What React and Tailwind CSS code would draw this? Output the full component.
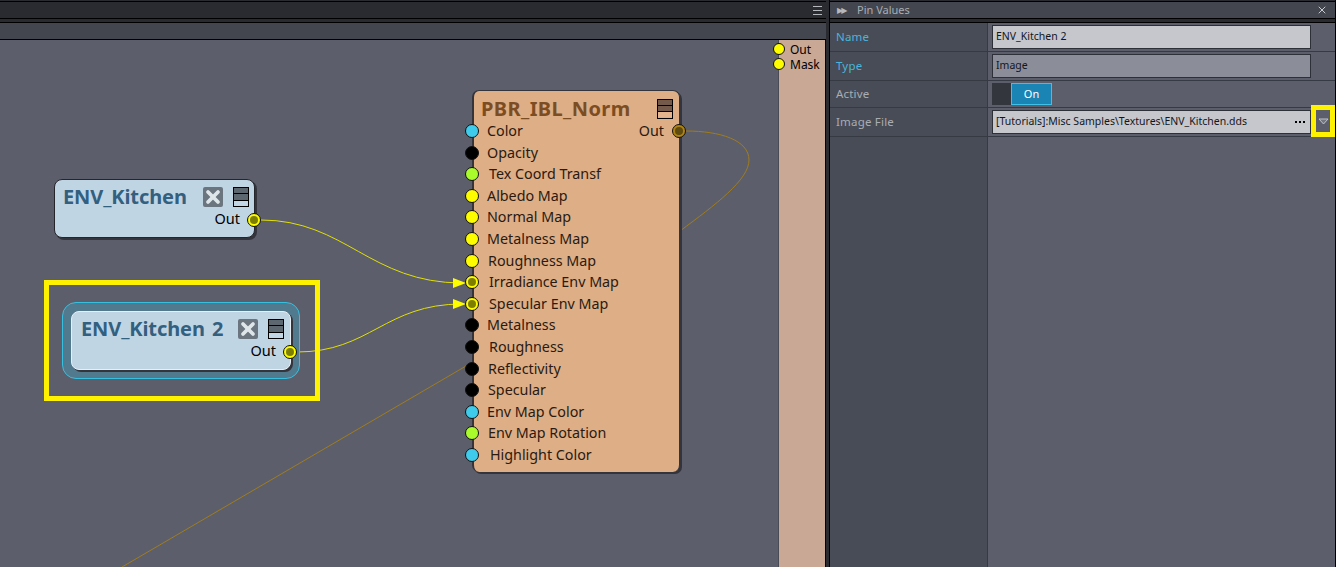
import React from "react";
import { X } from "lucide-react";

const tahoma = "font-['Noto_Sans','DejaVu_Sans',sans-serif]";

// pin colours used in the graph
const pinColor = {
  blue: "bg-[#3fcbeb]",
  black: "bg-black",
  green: "bg-[#a9fb2c]",
  yellow: "bg-[#fdfd00]",
};

const pbrPins = [
  { label: "Color", color: "blue", pad: "pl-[13px]" },
  { label: "Opacity", color: "black", pad: "pl-[13px]" },
  { label: "Tex Coord Transf", color: "green", pad: "pl-[15px]" },
  { label: "Albedo Map", color: "yellow", pad: "pl-[13px]" },
  { label: "Normal Map", color: "yellow", pad: "pl-[13px]" },
  { label: "Metalness Map", color: "yellow", pad: "pl-[13px]" },
  { label: "Roughness Map", color: "yellow", pad: "pl-[14px]" },
  { label: "Irradiance Env Map", color: "yellow", pad: "pl-[15px]", linked: true },
  { label: "Specular Env Map", color: "yellow", pad: "pl-[15px]", linked: true },
  { label: "Metalness", color: "black", pad: "pl-[13px]" },
  { label: "Roughness", color: "black", pad: "pl-[15px]" },
  { label: "Reflectivity", color: "black", pad: "pl-[14px]" },
  { label: "Specular", color: "black", pad: "pl-[14px]" },
  { label: "Env Map Color", color: "blue", pad: "pl-[13px]" },
  { label: "Env Map Rotation", color: "green", pad: "pl-[14px]" },
  { label: "Highlight Color", color: "blue", pad: "pl-[16px]" },
];

function Pin({ color, linked, className = "" }) {
  return (
    <span
      className={`absolute w-[14px] h-[14px] rounded-full border border-[#111] flex items-center justify-center ${pinColor[color]} ${className}`}
    >
      {linked && <span className="w-[8px] h-[8px] rounded-full bg-[#7d7d00]" />}
    </span>
  );
}

// little three band collapse icon on each node
function BandIcon({ top = "bg-[#5d6770]", bottom = "bg-[#c3d6e5]" }) {
  return (
    <span className="flex flex-col w-[16px] h-[20px] border border-black">
      <span className={`flex-1 border-b border-black ${top}`} />
      <span className={`flex-1 border-b border-black ${top}`} />
      <span className={`flex-1 ${bottom}`} />
    </span>
  );
}

function CloseBox() {
  return (
    <span className="w-[20px] h-[20px] rounded-[2px] bg-[#6a7580] flex items-center justify-center">
      <X size={20} strokeWidth={4.5} className="text-[#dfe6ea]" />
    </span>
  );
}

function EnvNode({ title, selected, className, titlePad, iconPad }) {
  return (
    <div
      className={`absolute h-[59px] rounded-[8px] bg-[#c0d5e4] shadow-[2px_2px_0_#33343c] ${
        selected ? "border border-[#e8f0f5]" : "border border-[#24262c]"
      } ${className}`}
    >
      <div className="flex items-center h-[34px]">
        <span className={`${titlePad} text-[20px] font-bold leading-none tracking-[-0.1px] [word-spacing:2px] text-[#33607f] whitespace-nowrap`}>
          {title}
        </span>
        <span className={`ml-auto flex items-center gap-[10px] ${iconPad}`}>
          <CloseBox />
          <BandIcon />
        </span>
      </div>
      <div className="absolute right-[14px] top-[28px] text-[14.5px] leading-[20px] text-black">Out</div>
      <Pin color="yellow" linked className="right-[-7px] top-[33px]" />
    </div>
  );
}

function PropRow({ label, labelColor = "text-[#a9adb3]", height, children }) {
  return (
    <div className={`flex border-b border-[#363a42] ${height}`}>
      <div className={`w-[158px] shrink-0 flex items-center pl-[6px] text-[11.5px] tracking-[0.2px] ${labelColor} bg-[#484c56] border-r border-[#363a42]`}>
        {label}
      </div>
      <div className="flex-1 flex items-center pl-[4px] bg-[#5c5f6b]">{children}</div>
    </div>
  );
}

export default function App() {
  return (
    <div className={`w-[1336px] h-[567px] flex overflow-hidden bg-[#2a2b31] ${tahoma}`}>
      {/* graph side */}
      <div className="w-[826px] shrink-0 flex flex-col">
        <div className="h-[16px] mt-[1px] flex items-center justify-end pr-[4px] bg-[#2a2b31] border-t border-black box-content">
          <span className="flex flex-col gap-[3px] w-[9px]">
            <span className="h-px bg-[#b5b8bd]" />
            <span className="h-px bg-[#b5b8bd]" />
            <span className="h-px bg-[#b5b8bd]" />
          </span>
        </div>
        <div className="h-[1px] bg-black" />
        <div className="h-[16px] mt-[3px] bg-[#43464f] border-t border-black box-content" />
        <div className="relative h-[528px] bg-[#5c5f6b] border-t border-r border-black overflow-hidden">
          {/* output node cut off at the right */}
          <div className="absolute left-[778px] top-0 right-0 bottom-0 bg-[#c9a896] border-l border-[#4a4c55]">
            <div className="absolute left-[11px] top-[2px] text-[12px] leading-[15px] text-black">
              <div>Out</div>
              <div>Mask</div>
            </div>
            <Pin color="yellow" className="left-[-6px] top-[3px] !w-[12px] !h-[12px]" />
            <Pin color="yellow" className="left-[-6px] top-[18px] !w-[12px] !h-[12px]" />
          </div>

          {/* wires */}
          <svg className="absolute inset-0" width="826" height="527" viewBox="0 40 826 527" fill="none">
            <path d="M261 220 C345 220 370 283 462 283" stroke="#e2e000" strokeWidth="1" />
            <path d="M297 352 C370 352 385 304 462 304" stroke="#e2e000" strokeWidth="1" />
            <path d="M686 131 C720 131 749 140 749 160 C749 180 715 205 680 231" stroke="#a07c1c" strokeWidth="1" />
            <path d="M466 366 L122 567" stroke="#a07c1c" strokeWidth="1" />
            <path d="M453 278 L466 283 L453 288 Z" fill="#fdfd00" />
            <path d="M453 299 L466 304 L453 309 Z" fill="#fdfd00" />
          </svg>

          <EnvNode title="ENV_Kitchen" titlePad="pl-[8px]" iconPad="pr-[5px]" className="left-[54px] top-[139px] w-[201px]" />

          {/* selected node with glow */}
          <div className="absolute left-[62px] top-[262px] w-[238px] h-[77px] rounded-[14px] bg-[#527a8f] border border-[#35c0e0]" />
          <EnvNode title="ENV_Kitchen 2" titlePad="pl-[9px]" iconPad="pr-[6px]" selected className="left-[71px] top-[271px] w-[220px]" />

          {/* big material node */}
          <div className="absolute left-[472px] top-[50px] w-[208px] h-[382px] rounded-[7px] bg-[#deae87] border-l-2 border-t border-r border-[#33343c] shadow-[2px_2px_0_#33343c]">
            <div className="flex items-center h-[29px] pt-[6px]">
              <span className="pl-[7px] text-[20px] font-bold leading-none tracking-[0.4px] text-[#7c4d22] whitespace-nowrap">
                PBR_IBL_Norm
              </span>
              <span className="ml-auto pr-[6px]">
                <BandIcon top="bg-[#735a4a]" bottom="bg-[#e4b48e]" />
              </span>
            </div>
            <div className="relative flex flex-col">
              {pbrPins.map((pin) => (
                <div key={pin.label} className={`relative h-[21.6px] flex items-center text-[14.3px] text-[#2a1a10] whitespace-nowrap ${pin.pad}`}>
                  <Pin color={pin.color} linked={pin.linked} className="left-[-9px] top-[4px]" />
                  {pin.label}
                </div>
              ))}
              <div className="absolute right-[15px] top-0 h-[21.6px] flex items-center text-[14.3px] text-[#2a1a10]">Out</div>
              <span className="absolute right-[-7px] top-[4px] w-[14px] h-[14px] rounded-full border border-[#111] bg-[#b08410] flex items-center justify-center">
                <span className="w-[8px] h-[8px] rounded-full bg-[#5f4a10]" />
              </span>
            </div>
          </div>

          {/* highlight box */}
          <div className="absolute left-[44px] top-[240px] w-[276px] h-[121px] border-[5px] border-[#fff200]" />
        </div>
      </div>

      {/* pin values panel */}
      <div className="flex-1 ml-[3px] mr-[3px] flex flex-col border-x border-black">
        <div className="h-[16px] mt-[1px] box-content flex items-center bg-[#43464f] border-y border-black text-[#a9adb3] text-[11px]">
          <span className="flex pl-[7px] w-[27px] text-[8px] leading-none tracking-[-2px] text-[#b5b8bd]">▶▶</span>
          <span>Pin Values</span>
          <X size={12} className="ml-auto mr-[7px] text-[#c8cbd0]" />
        </div>
        <div className="mt-[3px] flex-1 flex flex-col border-t border-black">
          <PropRow label="Name" labelColor="text-[#48b4dc]" height="h-[29px]">
            <div className="w-[319px] h-[24px] flex items-center pl-[3px] bg-[#c5c7cd] border border-[#2d3037] text-[10.5px] text-[#14161a]">
              ENV_Kitchen 2
            </div>
          </PropRow>
          <PropRow label="Type" labelColor="text-[#48b4dc]" height="h-[29px]">
            <div className="w-[319px] h-[24px] flex items-center pl-[3px] bg-[#8b8e99] border border-[#2d3037] text-[10.5px] text-[#14161a]">
              Image
            </div>
          </PropRow>
          <PropRow label="Active" height="h-[27px]">
            <div className="flex w-[60px] h-[22px] bg-[#34363d]">
              <span className="w-[19px]" />
              <span className="flex-1 flex items-center justify-center bg-[#1a84b4] border border-[#3ec0e8] text-[11px] text-white">On</span>
            </div>
          </PropRow>
          <PropRow label="Image File" height="h-[29px]">
            <div className="w-[319px] h-[24px] flex items-center pl-[3px] pr-[5px] bg-[#c5c7cd] border border-[#2d3037] text-[10.5px] text-[#14161a] whitespace-nowrap">
              [Tutorials]:Misc Samples\Textures\ENV_Kitchen.dds
              <span className="ml-auto flex gap-[2px]">
                <span className="w-[2px] h-[2px] bg-black" />
                <span className="w-[2px] h-[2px] bg-black" />
                <span className="w-[2px] h-[2px] bg-black" />
              </span>
            </div>
            <div className="w-[24px] h-[32px] mt-[-2px] flex items-center justify-center border-[5px] border-[#fff200] shrink-0 bg-[#5c5f6b] relative z-10">
              <svg width="11" height="7" viewBox="0 0 11 7">
                <path d="M1 1 H10 L5.5 6 Z" fill="#73767f" stroke="#c0c3c8" strokeWidth="1" />
              </svg>
            </div>
          </PropRow>
          <div className="flex-1 flex">
            <div className="w-[158px] bg-[#484c56] border-r border-[#363a42]" />
            <div className="flex-1 bg-[#5c5f6b]" />
          </div>
        </div>
      </div>
    </div>
  );
}
